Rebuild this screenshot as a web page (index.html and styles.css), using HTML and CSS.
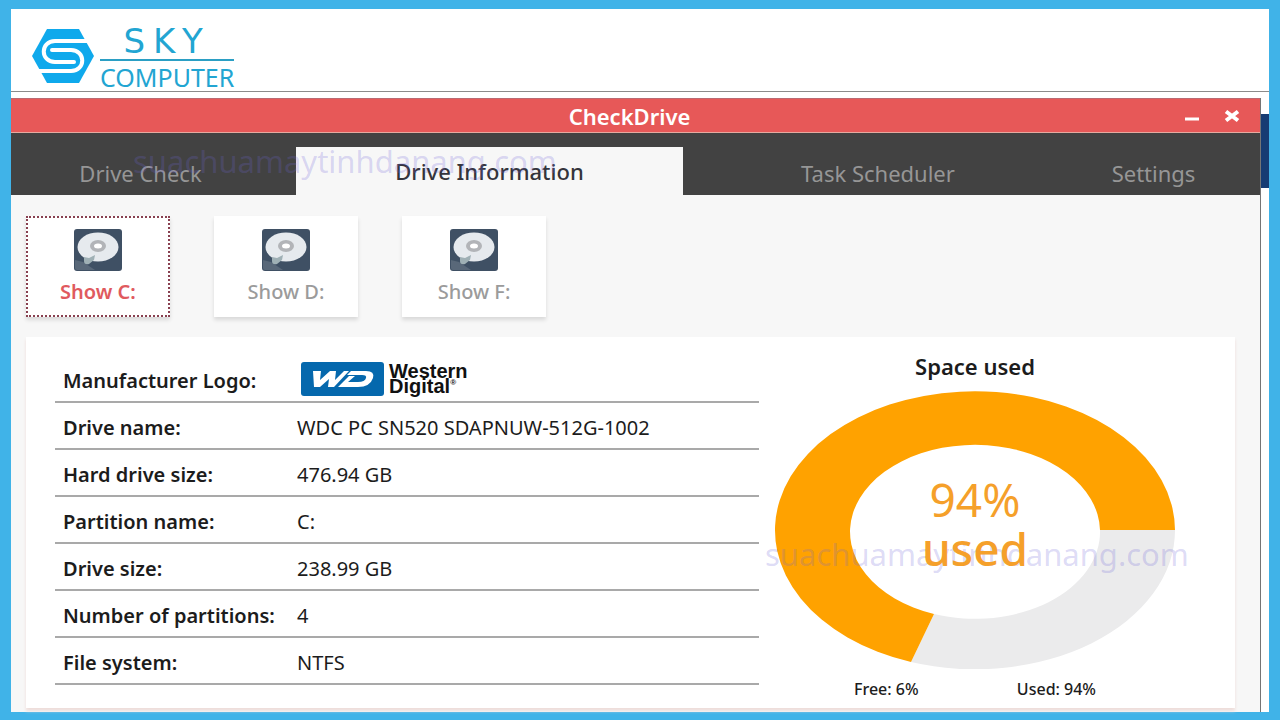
FILE: index.html
```html
<!DOCTYPE html>
<html lang="en">
<head>
<meta charset="utf-8">
<title>CheckDrive</title>
<link rel="stylesheet" href="styles.css">
</head>
<body>
<svg class="defs" width="0" height="0" aria-hidden="true">
  <symbol id="disk" viewBox="0 0 48 42">
    <rect width="48" height="42" rx="3" fill="#3f5064"/>
    <path d="M1 31l8 2 12 8H3q-2 0-2-2z" fill="#596879"/>
    <ellipse cx="24" cy="18" rx="20.500" ry="14.500" fill="#e6eaee"/>
    <path d="M10 28l5 1 6-3-1 5-5 4q-5 1-5-3z" fill="#9fb0b5"/>
    <ellipse cx="24" cy="17" rx="8" ry="6" fill="#b2b4b8"/>
    <ellipse cx="24" cy="17" rx="4" ry="2.500" fill="#fff"/>
  </symbol>
</svg>
<div class="page">
  <header class="brand">
    <svg class="brand-mark" viewBox="0 0 62 54" aria-hidden="true">
      <path d="M15 0H47L62 27 47 54H15L0 27Z" fill="#0fa9ec"/>
      <path d="M64 12H23C8 12 8 33 23 33H42" fill="none" stroke="#fff" stroke-width="4" stroke-linecap="round"/>
      <path d="M-2 42H39C54 42 54 21 39 21H20" fill="none" stroke="#fff" stroke-width="4" stroke-linecap="round"/>
    </svg>
    <div class="brand-text">
      <span class="brand-top">SKY</span>
      <span class="brand-bottom">COMPUTER</span>
    </div>
  </header>
  <main class="stage">
    <div class="window">
      <div class="titlebar">
        <h1>CheckDrive</h1>
        <div class="controls">
          <button type="button" aria-label="Minimize"><svg width="16" height="14" viewBox="0 0 16 14"><path d="M1 10H15" stroke="#fff" stroke-width="3"/></svg></button>
          <button type="button" aria-label="Close"><svg width="16" height="14" viewBox="0 0 16 14"><path d="M2 2.500L14 11.500M14 2.500L2 11.500" stroke="#fff" stroke-width="4"/></svg></button>
        </div>
      </div>
      <nav class="tabs">
        <button type="button" class="tab side">Drive Check</button>
        <button type="button" class="tab active">Drive Information</button>
        <button type="button" class="tab">Task Scheduler</button>
        <button type="button" class="tab side">Settings</button>
        <span class="watermark mark-top">suachuamaytinhdanang.com</span>
      </nav>
      <div class="content">
        <div class="drives">
          <button type="button" class="drive selected"><svg width="48" height="42"><use href="#disk"/></svg><span>Show C:</span></button>
          <button type="button" class="drive"><svg width="48" height="42"><use href="#disk"/></svg><span>Show D:</span></button>
          <button type="button" class="drive"><svg width="48" height="42"><use href="#disk"/></svg><span>Show F:</span></button>
        </div>
        <section class="card">
          <table class="info">
            <tr><th scope="row">Manufacturer Logo:</th><td>
              <div class="wd">
                <svg width="83" height="34" viewBox="0 0 83 34" role="img" aria-label="WD">
                  <rect width="83" height="34" rx="3" fill="#0568ad"/>
                  <path d="M12 9H20L19 18 29 9H35L34 18 43 9H48L33 25H27L28 17 19 25H13Z" fill="#fff"/>
                  <path d="M50 9H65Q74 9 72 16 69 25 57 25H37L48 14H54L47 20H57Q64 20 65 16 66 13 61 13H46Z" fill="#fff"/>
                </svg>
                <span class="wd-name">Western<br>Digital<small>®</small></span>
              </div></td></tr>
            <tr><th scope="row">Drive name:</th><td>WDC PC SN520 SDAPNUW-512G-1002</td></tr>
            <tr><th scope="row">Hard drive size:</th><td>476.94 GB</td></tr>
            <tr><th scope="row">Partition name:</th><td>C:</td></tr>
            <tr><th scope="row">Drive size:</th><td>238.99 GB</td></tr>
            <tr><th scope="row">Number of partitions:</th><td>4</td></tr>
            <tr><th scope="row">File system:</th><td>NTFS</td></tr>
          </table>
          <div class="usage">
            <h2>Space used</h2>
            <div class="donut">
              <svg viewBox="0 0 400 278" aria-hidden="true">
                <path d="M400 139A200 139 0 0 1 136 271L159 223A125 87 0 0 0 325 139Z" fill="#ebebec"/>
                <path d="M400 139A200 139 0 1 0 136 271L159 223A125 87 0 1 1 325 139Z" fill="#ffa200"/>
              </svg>
              <span class="watermark mark-chart">suachuamaytinhdanang.com</span>
              <p class="percent">94%<br><span>used</span></p>
            </div>
            <div class="legend"><span>Free: 6%</span><span>Used: 94%</span></div>
          </div>
        </section>
      </div>
    </div>
    <div class="edge"></div>
  </main>
</div>
</body>
</html>
```
FILE: styles.css
```css
* { box-sizing: border-box; }

body {
  margin: 0;
  background: #40b3e8;
  color: #1c1c1c;
  font-family: "Noto Sans", "Open Sans", sans-serif;
}

button { border: 0; padding: 0; background: none; font: inherit; }
h1, h2, p { margin: 0; }
.defs { position: absolute; }

.page {
  display: flex;
  flex-direction: column;
  min-height: 100vh;
  border: solid #40b3e8;
  border-width: 9px 11px 8px;
  background: #fff;
}

.brand {
  display: flex;
  gap: 6px;
  padding: 14px 21px 0;
  height: 83px;
  border-bottom: 1px solid #8b8b8b;
}
.brand-mark { width: 62px; height: 54px; margin-top: 6px; }
.brand-text { display: flex; flex-direction: column; color: #22a5d2; }
.brand-top {
  height: 38px;
  border-bottom: 2px solid #2b9fc4;
  font-family: "DejaVu Sans", sans-serif;
  font-size: 34px;
  line-height: 36px;
  letter-spacing: 8px;
  text-align: center;
}
.brand-bottom { font-size: 25px; line-height: 32px; }

.stage { display: flex; flex: 1; padding-top: 6px; }
.edge { width: 8px; height: 74px; margin-top: 16px; background: #173c73; }
.window {
  display: flex;
  flex: 1;
  flex-direction: column;
  border-right: 1px solid #757575;
}

.titlebar {
  display: grid;
  grid-template-columns: 1fr auto 1fr;
  align-items: center;
  height: 35px;
  padding: 0 20px 0 8px;
  border-top: 1px solid #b96a72;
  border-bottom: 1px solid #e5aaa0;
  background: #e75858;
  color: #fff;
}
.titlebar h1 { grid-column: 2; font-size: 22px; font-weight: 600; line-height: 28px; }
.controls { display: flex; justify-content: flex-end; gap: 24px; }
.controls button { display: flex; }

.tabs {
  position: relative;
  display: grid;
  grid-template-columns: 285fr 387fr 390fr 187fr;
  align-items: end;
  height: 62px;
  background: #424242;
}
.tab { height: 48px; padding-top: 4px; color: #969696; font-size: 22px; line-height: 28px; }
.side { padding-right: 26px; }
.active { padding-top: 0; background: #f7f7f7; color: #34343b; font-weight: 500; }

.watermark {
  position: absolute;
  color: rgba(110, 100, 215, 0.24);
  font-size: 31px;
  line-height: 40px;
  white-space: nowrap;
  pointer-events: none;
}
.mark-top { left: 122px; top: 8px; }
.mark-chart { left: -10px; top: 143px; }

.content {
  display: flex;
  flex: 1;
  flex-direction: column;
  gap: 20px;
  padding: 21px 25px 4px 15px;
  background: #f7f7f7;
}
.drives { display: flex; gap: 44px; }
.drive {
  display: flex;
  flex-direction: column;
  align-items: center;
  gap: 8px;
  width: 144px;
  height: 101px;
  padding-top: 13px;
  background: #fff;
  box-shadow: 0 3px 4px rgba(0, 0, 0, 0.12);
  color: #9b9b9b;
  font-size: 20px;
  font-weight: 500;
  line-height: 26px;
}
.selected { outline: 2px dotted #884050; outline-offset: -2px; color: #e05a5e; font-weight: 600; }

.card {
  display: grid;
  flex: 1;
  grid-template-columns: minmax(0, 704fr) minmax(0, 400fr);
  gap: 16px;
  align-items: start;
  padding: 18px 60px 0 29px;
  background: #fff;
  box-shadow: 0 3px 3px #eeddda;
}
.info { width: 100%; border-collapse: collapse; table-layout: fixed; font-size: 20px; line-height: 24px; }
.info tr { height: 47px; border-bottom: 2px solid #a9a9a9; }
.info th, .info td { padding: 5px 0 0; text-align: left; }
.info th { width: 242px; padding-left: 8px; font-size: 20px; font-weight: 600; white-space: nowrap; }
.wd { display: flex; gap: 5px; padding: 0 0 4px 4px; }
.wd-name { color: #111; font: bold 20px/15px "Liberation Sans", sans-serif; padding-top: 2px; }
.wd-name small { font-size: 8px; line-height: 8px; vertical-align: top; }

.usage { text-align: center; }
.usage h2 { margin-bottom: 14px; font-size: 22px; font-weight: 600; line-height: 22px; }
.donut { position: relative; }
.donut svg { display: block; width: 100%; }
.percent {
  position: absolute;
  inset: 84px 0 auto;
  color: #f5a02a;
  font-size: 46px;
  line-height: 49px;
}
.percent span { font-weight: 500; }
.legend { display: flex; justify-content: space-between; padding: 10px 79px 0; font-size: 16px; font-weight: 500; line-height: 20px; }
```
